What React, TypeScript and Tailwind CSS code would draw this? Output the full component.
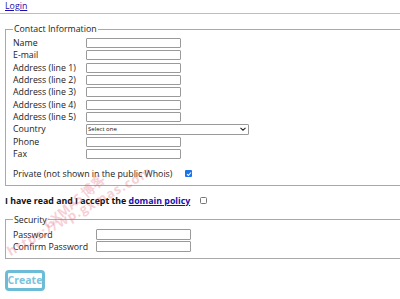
import React from "react";

const Input = ({ w = "w-[95px] h-[10px]" }: { w?: string }) => (
  <div className={`${w} border border-[#9a9a9a] rounded-[1px] bg-white`} />
);

const Row = ({ label, children }: { label: string; children: React.ReactNode }) => (
  <div className="flex items-center h-[12.3px]">
    <div className="w-[73px] shrink-0 leading-[12px] whitespace-nowrap">{label}</div>
    {children}
  </div>
);

export default function App() {
  const rows = ["Name", "E-mail", "Address (line 1)", "Address (line 2)", "Address (line 3)", "Address (line 4)", "Address (line 5)"];
  return (
    <div className="relative w-[400px] h-[299px] overflow-hidden bg-white text-[8.8px] text-[#222] font-['Open_Sans',sans-serif]">
      <div className="w-[420px]">
        <div className="pl-[5px] h-[13px] leading-[12px]">
          <a href="#" className="text-[#1a0dab] underline">Login</a>
        </div>
        <div className="h-[1px] bg-[#bdbdbd]" />
        <fieldset className="ml-[5px] mt-[9px] border border-[#a9a9a9] pl-[7px] pt-[2px] pb-[5px]">
          <legend className="px-[1px] leading-[12px]">Contact Information</legend>
          {rows.map((r) => (
            <Row key={r} label={r}>
              <Input />
            </Row>
          ))}
          <Row label="Country">
            <div className="w-[163px] h-[11px] border border-[#9a9a9a] rounded-[1px] flex items-center justify-between pl-[1px] pr-[2px]">
              <span className="text-[6px] leading-[8px] text-[#111]">Select one</span>
              <svg width="6" height="4" viewBox="0 0 6 4">
                <path d="M0.5 0.8 L3 3.2 L5.5 0.8" fill="none" stroke="#222" strokeWidth="1.1" />
              </svg>
            </div>
          </Row>
          <Row label="Phone">
            <Input />
          </Row>
          <Row label="Fax">
            <Input />
          </Row>
          <div className="flex items-center h-[12px] mt-[8px]">
            <span className="leading-[12px]">Private (not shown in the public Whois)</span>
            <span className="ml-[13px] w-[7px] h-[7px] rounded-[1px] bg-[#1a73e8] flex items-center justify-center">
              <svg width="6" height="6" viewBox="0 0 6 6">
                <path d="M1 3.2 L2.4 4.5 L5 1.5" fill="none" stroke="white" strokeWidth="1.1" />
              </svg>
            </span>
          </div>
        </fieldset>
        <div className="flex items-center h-[12px] mt-[9px] pl-[5px]">
          <span className="font-bold leading-[12px] text-[#111]">
            I have read and I accept the <a href="#" className="text-[#1a0dab] underline">domain policy</a>
          </span>
          <span className="ml-[10px] w-[7px] h-[7px] rounded-[1.5px] border border-[#777] bg-white" />
        </div>
        <fieldset className="ml-[5px] mt-[7px] border border-[#a9a9a9] pl-[7px] pt-[3px] pb-[5px]">
          <legend className="px-[1px] leading-[12px]">Security</legend>
          <div className="flex items-center h-[12px]">
            <div className="w-[83px] leading-[12px]">Password</div>
            <Input w="w-[95px] h-[11px]" />
          </div>
          <div className="flex items-center h-[12px]">
            <div className="w-[83px] leading-[12px] whitespace-nowrap">Confirm Password</div>
            <Input w="w-[95px] h-[11px]" />
          </div>
        </fieldset>
        <div className="pl-[5px] mt-[11px]">
          <button className="w-[40px] h-[21px] border-[3px] border-[#6cbcd8] rounded-[4px] bg-white text-[#7cc3dd] font-bold text-[10.5px] leading-[14px] flex items-center justify-center">
            Create
          </button>
        </div>
      </div>
      <div className="pointer-events-none absolute left-[45px] top-[217px] h-[18px] -rotate-[40deg] origin-[0_50%] text-[#e0485c] opacity-25 font-bold text-[13px] leading-[18px] whitespace-nowrap">
        GXMAS 博客
      </div>
      <div className="pointer-events-none absolute left-[8px] top-[243px] h-[18px] -rotate-[30deg] origin-[0_50%] text-[#e0485c] opacity-25 font-bold text-[13px] leading-[18px] whitespace-nowrap tracking-[1px]">
        https://wp.gxmas.com
      </div>
    </div>
  );
}
